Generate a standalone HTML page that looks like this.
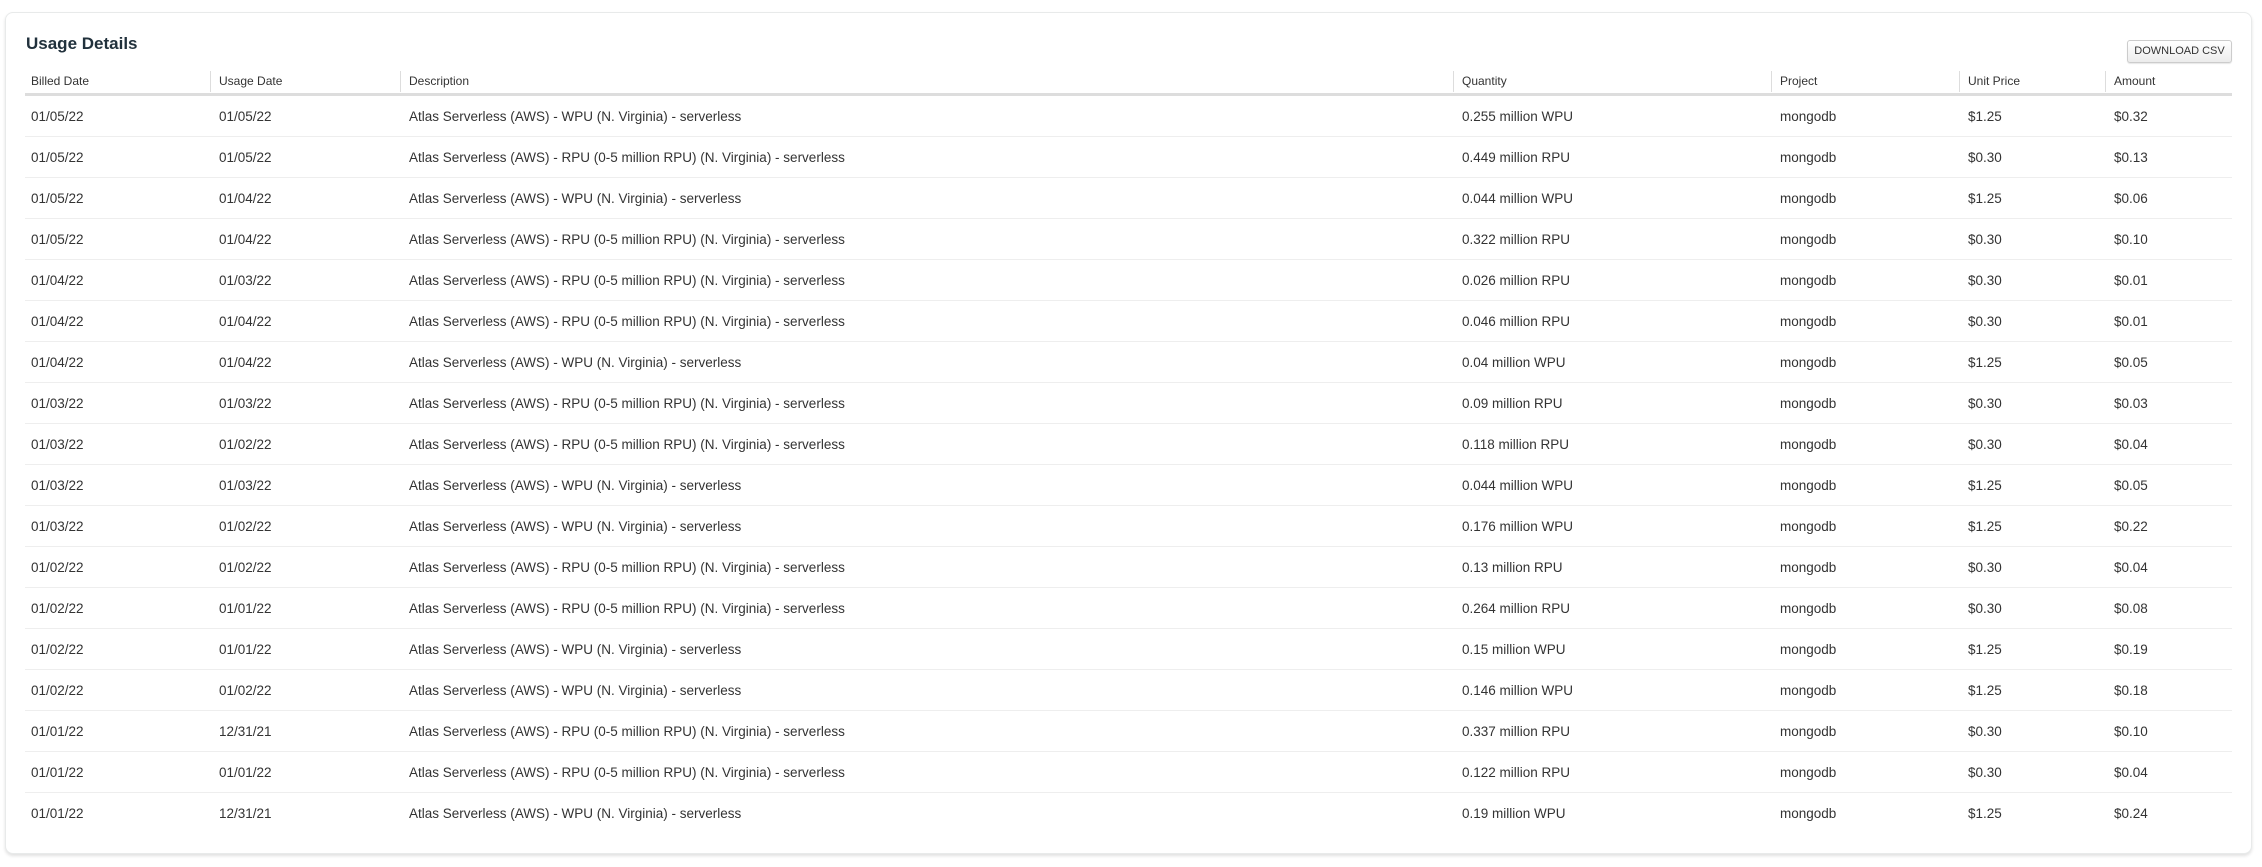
<!DOCTYPE html>
<html><head><meta charset="utf-8"><style>
body{margin:0;background:#fff;font-family:"Liberation Sans",Arial,sans-serif;width:2262px;height:867px;overflow:hidden;position:relative;}
.card{position:absolute;left:5px;top:12px;width:2245px;height:840px;border:1px solid #e8eaea;border-radius:8px;box-shadow:0 2px 3px rgba(0,0,0,.12);background:#fff;}
h2{position:absolute;left:20px;top:21px;margin:0;font-size:17px;font-weight:bold;color:#21313c;}
.btn{position:absolute;left:2121px;top:27px;width:103px;height:21px;border:1px solid #ccc;border-radius:3px;background:linear-gradient(#fff,#ececec);font-size:11px;color:#333;text-align:center;line-height:21px;box-shadow:0 1px 1px rgba(0,0,0,.1);}
table{position:absolute;left:19px;top:55px;width:2207px;border-collapse:collapse;table-layout:fixed;font-size:13.5px;color:#333;}
th{font-weight:normal;font-size:12px;text-align:left;height:25px;padding:0 0 0 9px;border-bottom:3px solid #ddd;position:relative;vertical-align:middle;}
th:first-child,td:first-child{padding-left:6px;}
th+th:before{content:"";position:absolute;left:0;top:3px;height:21px;border-left:1px solid #ddd;}
td{height:40px;padding:0 0 0 9px;border-bottom:1px solid #eee;vertical-align:middle;white-space:nowrap;}
tr:last-child td{border-bottom:none;}
</style></head><body>
<div class="card">
<h2>Usage Details</h2>
<div class="btn">DOWNLOAD CSV</div>
<table>
<colgroup><col style="width:185px"><col style="width:190px"><col style="width:1053px"><col style="width:318px"><col style="width:188px"><col style="width:146px"><col style="width:127px"></colgroup>
<tr><th>Billed Date</th><th>Usage Date</th><th>Description</th><th>Quantity</th><th>Project</th><th>Unit Price</th><th>Amount</th></tr>
<tr><td>01/05/22</td><td>01/05/22</td><td>Atlas Serverless (AWS) - WPU (N. Virginia) - serverless</td><td>0.255 million WPU</td><td>mongodb</td><td>$1.25</td><td>$0.32</td></tr>
<tr><td>01/05/22</td><td>01/05/22</td><td>Atlas Serverless (AWS) - RPU (0-5 million RPU) (N. Virginia) - serverless</td><td>0.449 million RPU</td><td>mongodb</td><td>$0.30</td><td>$0.13</td></tr>
<tr><td>01/05/22</td><td>01/04/22</td><td>Atlas Serverless (AWS) - WPU (N. Virginia) - serverless</td><td>0.044 million WPU</td><td>mongodb</td><td>$1.25</td><td>$0.06</td></tr>
<tr><td>01/05/22</td><td>01/04/22</td><td>Atlas Serverless (AWS) - RPU (0-5 million RPU) (N. Virginia) - serverless</td><td>0.322 million RPU</td><td>mongodb</td><td>$0.30</td><td>$0.10</td></tr>
<tr><td>01/04/22</td><td>01/03/22</td><td>Atlas Serverless (AWS) - RPU (0-5 million RPU) (N. Virginia) - serverless</td><td>0.026 million RPU</td><td>mongodb</td><td>$0.30</td><td>$0.01</td></tr>
<tr><td>01/04/22</td><td>01/04/22</td><td>Atlas Serverless (AWS) - RPU (0-5 million RPU) (N. Virginia) - serverless</td><td>0.046 million RPU</td><td>mongodb</td><td>$0.30</td><td>$0.01</td></tr>
<tr><td>01/04/22</td><td>01/04/22</td><td>Atlas Serverless (AWS) - WPU (N. Virginia) - serverless</td><td>0.04 million WPU</td><td>mongodb</td><td>$1.25</td><td>$0.05</td></tr>
<tr><td>01/03/22</td><td>01/03/22</td><td>Atlas Serverless (AWS) - RPU (0-5 million RPU) (N. Virginia) - serverless</td><td>0.09 million RPU</td><td>mongodb</td><td>$0.30</td><td>$0.03</td></tr>
<tr><td>01/03/22</td><td>01/02/22</td><td>Atlas Serverless (AWS) - RPU (0-5 million RPU) (N. Virginia) - serverless</td><td>0.118 million RPU</td><td>mongodb</td><td>$0.30</td><td>$0.04</td></tr>
<tr><td>01/03/22</td><td>01/03/22</td><td>Atlas Serverless (AWS) - WPU (N. Virginia) - serverless</td><td>0.044 million WPU</td><td>mongodb</td><td>$1.25</td><td>$0.05</td></tr>
<tr><td>01/03/22</td><td>01/02/22</td><td>Atlas Serverless (AWS) - WPU (N. Virginia) - serverless</td><td>0.176 million WPU</td><td>mongodb</td><td>$1.25</td><td>$0.22</td></tr>
<tr><td>01/02/22</td><td>01/02/22</td><td>Atlas Serverless (AWS) - RPU (0-5 million RPU) (N. Virginia) - serverless</td><td>0.13 million RPU</td><td>mongodb</td><td>$0.30</td><td>$0.04</td></tr>
<tr><td>01/02/22</td><td>01/01/22</td><td>Atlas Serverless (AWS) - RPU (0-5 million RPU) (N. Virginia) - serverless</td><td>0.264 million RPU</td><td>mongodb</td><td>$0.30</td><td>$0.08</td></tr>
<tr><td>01/02/22</td><td>01/01/22</td><td>Atlas Serverless (AWS) - WPU (N. Virginia) - serverless</td><td>0.15 million WPU</td><td>mongodb</td><td>$1.25</td><td>$0.19</td></tr>
<tr><td>01/02/22</td><td>01/02/22</td><td>Atlas Serverless (AWS) - WPU (N. Virginia) - serverless</td><td>0.146 million WPU</td><td>mongodb</td><td>$1.25</td><td>$0.18</td></tr>
<tr><td>01/01/22</td><td>12/31/21</td><td>Atlas Serverless (AWS) - RPU (0-5 million RPU) (N. Virginia) - serverless</td><td>0.337 million RPU</td><td>mongodb</td><td>$0.30</td><td>$0.10</td></tr>
<tr><td>01/01/22</td><td>01/01/22</td><td>Atlas Serverless (AWS) - RPU (0-5 million RPU) (N. Virginia) - serverless</td><td>0.122 million RPU</td><td>mongodb</td><td>$0.30</td><td>$0.04</td></tr>
<tr><td>01/01/22</td><td>12/31/21</td><td>Atlas Serverless (AWS) - WPU (N. Virginia) - serverless</td><td>0.19 million WPU</td><td>mongodb</td><td>$1.25</td><td>$0.24</td></tr>
</table>
</div>
</body></html>
